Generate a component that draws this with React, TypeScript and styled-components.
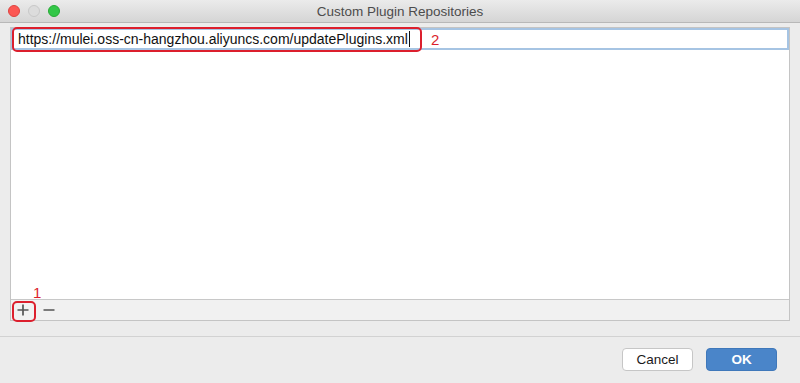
import * as React from 'react';
import styled, { createGlobalStyle } from 'styled-components';

const GlobalStyle = createGlobalStyle`
  html, body {
    margin: 0;
    padding: 0;
    background: #ececec;
  }
  body {
    font-family: 'Liberation Sans', Arial, sans-serif;
    font-size: 13px;
    color: #1a1a1a;
  }
`;

const lights = ['#fc5753', '#dcdcdc', '#33c748'];
const lightBorders = ['#de4340', '#c8c8c8', '#27aa35'];

export default function App() {
  return (
    <>
      <GlobalStyle />
      <Window>
        <TitleBar>
          <Lights>
            {lights.map((c, i) => (
              <Light key={c} color={c} $edge={lightBorders[i]} />
            ))}
          </Lights>
          <Title>Custom Plugin Repositories</Title>
        </TitleBar>

        <Body>
          <ListPanel>
            <Field>
              <FieldText>
                https://mulei.oss-cn-hangzhou.aliyuncs.com/updatePlugins.xml
                <Caret />
              </FieldText>
            </Field>
            <Empty />
            <Toolbar>
              <ToolButton>
                <svg width="14" height="14" viewBox="0 0 14 14">
                  <path d="M7 1.5v11M1.5 7h11" stroke="#555" strokeWidth="1.7" />
                </svg>
              </ToolButton>
              <ToolButton>
                <svg width="14" height="14" viewBox="0 0 14 14">
                  <path d="M1.5 7h11" stroke="#666" strokeWidth="1.7" />
                </svg>
              </ToolButton>
            </Toolbar>
          </ListPanel>
        </Body>

        <Footer>
          <Button>Cancel</Button>
          <Button $primary>OK</Button>
        </Footer>

        <Mark style={{ left: 12, top: 27, width: 410, height: 25 }} />
        <MarkLabel style={{ left: 431, top: 31 }}>2</MarkLabel>
        <Mark style={{ left: 12, top: 301, width: 24, height: 21 }} />
        <MarkLabel style={{ left: 33, top: 284 }}>1</MarkLabel>
      </Window>
    </>
  );
}

const Window = styled.div`
  position: relative;
  width: 800px;
  height: 383px;
  display: flex;
  flex-direction: column;
  background: #ececec;
  overflow: hidden;
`;

const TitleBar = styled.div`
  position: relative;
  height: 22px;
  flex: none;
  display: flex;
  align-items: center;
  justify-content: center;
  background: linear-gradient(#ebebeb, #d5d5d5);
  border-bottom: 1px solid #b8b8b8;
`;

const Lights = styled.div`
  position: absolute;
  left: 8px;
  top: 5px;
  display: flex;
  gap: 8px;
`;

const Light = styled.span<{ color: string; $edge: string }>`
  width: 12px;
  height: 12px;
  border-radius: 50%;
  box-sizing: border-box;
  background: ${p => p.color};
  border: 0.5px solid ${p => p.$edge};
`;

const Title = styled.div`
  font-size: 13.5px;
  color: #4c4c4c;
`;

const Body = styled.div`
  padding: 4px 10px 0 10px;
  flex: none;
`;

const ListPanel = styled.div`
  height: 294px;
  box-sizing: border-box;
  border: 1px solid #c4c4c4;
  background: #fff;
  display: flex;
  flex-direction: column;
`;

const Field = styled.div`
  height: 22px;
  box-sizing: border-box;
  border: 2px solid #a6c4e3;
  display: flex;
  align-items: center;
  padding-left: 5px;
`;

const FieldText = styled.span`
  font-size: 14px;
  color: #111;
  display: flex;
  align-items: center;
`;

const Caret = styled.span`
  width: 1px;
  height: 16px;
  background: #111;
  margin-left: 1px;
`;

const Empty = styled.div`
  flex: 1;
`;

const Toolbar = styled.div`
  height: 20px;
  flex: none;
  border-top: 1px solid #c8c8c8;
  background: #f1f1f1;
  display: flex;
  align-items: center;
  gap: 12px;
  padding-left: 5px;
`;

const ToolButton = styled.span`
  display: flex;
  width: 14px;
  height: 14px;
`;

const Footer = styled.div`
  margin-top: 15px;
  border-top: 1px solid #d2d2d2;
  flex: 1;
  display: flex;
  justify-content: flex-end;
  align-items: flex-start;
  gap: 13px;
  padding: 11px 23px 0 0;
`;

const Button = styled.div<{ $primary?: boolean }>`
  width: 71px;
  height: 23px;
  box-sizing: border-box;
  border-radius: 4px;
  display: flex;
  align-items: center;
  justify-content: center;
  font-size: 13.5px;
  background: ${p => (p.$primary ? '#4a85c9' : '#fff')};
  color: ${p => (p.$primary ? '#fff' : '#1a1a1a')};
  font-weight: ${p => (p.$primary ? 'bold' : 'normal')};
  border: 1px solid ${p => (p.$primary ? '#3f78ba' : '#c6c6c6')};
`;

const Mark = styled.div`
  position: absolute;
  box-sizing: border-box;
  border: 2.5px solid #dc1f2d;
  border-radius: 5px;
`;

const MarkLabel = styled.div`
  position: absolute;
  color: #dc1f2d;
  font-size: 15px;
`;
